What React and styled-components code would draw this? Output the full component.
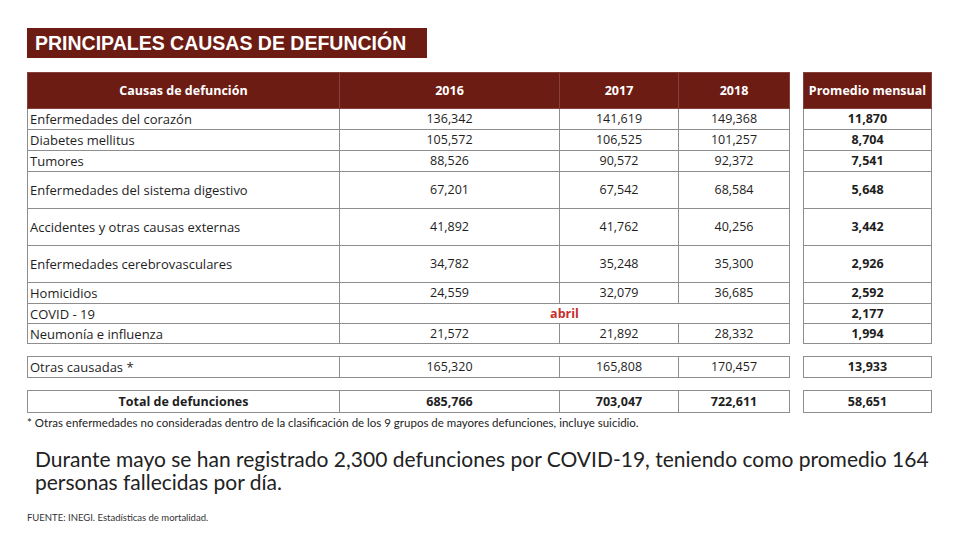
import styled, { createGlobalStyle } from 'styled-components';

const GlobalStyle = createGlobalStyle`
  body {
    margin: 0;
    background: #ffffff;
    font-family: "Open Sans", "Liberation Sans", sans-serif;
  }
`;

const MAROON = '#6d1c14';
const LINE = '#8e8e8e';

const Page = styled.div`
  width: 968px;
  height: 538px;
  box-sizing: border-box;
  padding: 28px 36px 0 27px;
  color: #222;
  overflow: hidden;
`;

const Title = styled.h1`
  width: 400px;
  height: 30px;
  box-sizing: border-box;
  margin: 0 0 14px;
  padding-left: 8px;
  background: ${MAROON};
  color: #fff;
  font-family: "Liberation Sans", Arial, sans-serif;
  font-weight: 700;
  font-size: 19.5px;
  line-height: 31px;
`;

const Group = styled.div`
  display: flex;
  gap: 13px;
  margin-bottom: ${p => (p.$last ? 0 : 12)}px;
`;

const Table = styled.table`
  width: ${p => p.$width}px;
  table-layout: fixed;
  border-collapse: collapse;
  border: 1px solid ${LINE};
`;

const Row = styled.tr`
  height: ${p => p.$h}px;
`;

const HeadCell = styled.th`
  background: ${MAROON};
  color: #fff;
  font-size: 12.5px;
  font-weight: 700;
  text-align: center;
  padding: 0;
  border: 1px solid #86413a;
`;

const Cell = styled.td`
  padding: 0 0 0 ${p => (p.$left ? '2px' : '0')};
  border: 1px solid ${LINE};
  border-top: 1px solid ${p => (p.$darkTop ? '#555' : LINE)};
  font-size: ${p => (p.$left ? '13px' : '12.5px')};
  font-weight: ${p => (p.$bold ? 700 : 400)};
  text-align: ${p => (p.$left ? 'left' : 'center')};
  vertical-align: middle;
  line-height: 16px;
  white-space: nowrap;
  color: #1e1e1e;
`;

const Month = styled(Cell)`
  color: #c4302b;
  font-weight: 700;
`;

const Note = styled.p`
  margin: 3px 0 0;
  font-family: Lato, "Liberation Sans", sans-serif;
  font-size: 11.5px;
  line-height: 14px;
  color: #222;
`;

const Summary = styled.p`
  margin: 17px 0 0 8px;
  font-family: Lato, "Liberation Sans", sans-serif;
  font-size: 21px;
  line-height: 23px;
  color: #222;
`;

const Source = styled.p`
  margin: 19px 0 0;
  font-family: Lato, "Liberation Sans", sans-serif;
  font-size: 9.5px;
  line-height: 11px;
  color: #333;
`;

const rows = [
  { cause: 'Enfermedades del corazón', h: 21, v: ['136,342', '141,619', '149,368'], avg: '11,870' },
  { cause: 'Diabetes mellitus', h: 21, v: ['105,572', '106,525', '101,257'], avg: '8,704' },
  { cause: 'Tumores', h: 21, v: ['88,526', '90,572', '92,372'], avg: '7,541' },
  { cause: 'Enfermedades del sistema digestivo', h: 37, v: ['67,201', '67,542', '68,584'], avg: '5,648' },
  { cause: 'Accidentes y otras causas externas', h: 37, v: ['41,892', '41,762', '40,256'], avg: '3,442' },
  { cause: 'Enfermedades cerebrovasculares', h: 37, v: ['34,782', '35,248', '35,300'], avg: '2,926' },
  { cause: 'Homicidios', h: 21, v: ['24,559', '32,079', '36,685'], avg: '2,592' },
  { cause: 'COVID - 19', h: 20, month: 'abril', avg: '2,177' },
  { cause: 'Neumonía e influenza', h: 20, v: ['21,572', '21,892', '28,332'], avg: '1,994' },
];

const Cols = () => (
  <colgroup>
    <col style={{ width: 312 }} />
    <col style={{ width: 220 }} />
    <col style={{ width: 119 }} />
    <col style={{ width: 111 }} />
  </colgroup>
);

export default function App() {
  return (
    <Page>
      <GlobalStyle />
      <Title>PRINCIPALES CAUSAS DE DEFUNCIÓN</Title>

      <Group>
        <Table $width={762}>
          <Cols />
          <thead>
            <Row $h={36}>
              <HeadCell>Causas de defunción</HeadCell>
              <HeadCell>2016</HeadCell>
              <HeadCell>2017</HeadCell>
              <HeadCell>2018</HeadCell>
            </Row>
          </thead>
          <tbody>
            {rows.map((r, i) => (
              <Row key={r.cause} $h={r.h}>
                <Cell $left>{r.cause}</Cell>
                {r.month ? (
                  <Month colSpan={3}>{r.month}</Month>
                ) : (
                  r.v.map((n, j) => (
                    <Cell key={j} $darkTop={i === 8 && j === 1}>{n}</Cell>
                  ))
                )}
              </Row>
            ))}
          </tbody>
        </Table>
        <Table $width={130}>
          <thead>
            <Row $h={36}>
              <HeadCell>Promedio mensual</HeadCell>
            </Row>
          </thead>
          <tbody>
            {rows.map(r => (
              <Row key={r.cause} $h={r.h}>
                <Cell $bold>{r.avg}</Cell>
              </Row>
            ))}
          </tbody>
        </Table>
      </Group>

      <Group>
        <Table $width={762}>
          <Cols />
          <tbody>
            <Row $h={21}>
              <Cell $left>Otras causadas *</Cell>
              <Cell>165,320</Cell>
              <Cell>165,808</Cell>
              <Cell>170,457</Cell>
            </Row>
          </tbody>
        </Table>
        <Table $width={130}>
          <tbody>
            <Row $h={21}>
              <Cell $bold>13,933</Cell>
            </Row>
          </tbody>
        </Table>
      </Group>

      <Group $last>
        <Table $width={762}>
          <Cols />
          <tbody>
            <Row $h={22}>
              <Cell $bold>Total de defunciones</Cell>
              <Cell $bold>685,766</Cell>
              <Cell $bold>703,047</Cell>
              <Cell $bold>722,611</Cell>
            </Row>
          </tbody>
        </Table>
        <Table $width={130}>
          <tbody>
            <Row $h={22}>
              <Cell $bold>58,651</Cell>
            </Row>
          </tbody>
        </Table>
      </Group>

      <Note>
        * Otras enfermedades no consideradas dentro de la clasificación de los 9 grupos de mayores defunciones, incluye suicidio.
      </Note>
      <Summary>
        Durante mayo se han registrado 2,300 defunciones por COVID-19, teniendo como promedio 164 personas fallecidas por día.
      </Summary>
      <Source>FUENTE: INEGI. Estadísticas de mortalidad.</Source>
    </Page>
  );
}
